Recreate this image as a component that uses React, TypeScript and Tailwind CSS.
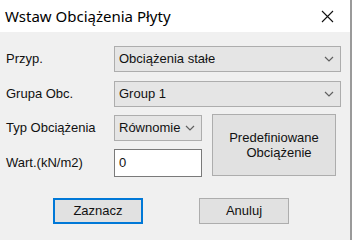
import React from 'react';

const font = { fontFamily: '"Liberation Sans", Arial, sans-serif' };

function Chevron() {
  return (
    <svg width="10" height="6" viewBox="0 0 10 6" className="shrink-0">
      <path d="M1 1 L5 5 L9 1" fill="none" stroke="#606060" strokeWidth="1.2" />
    </svg>
  );
}

function Combo({ value, width, textWidth }: { value: string; width: string; textWidth?: string }) {
  return (
    <div
      className={`${width} h-[26px] flex items-center justify-between bg-[#e5e5e5] border border-[#adadad] pl-[4px] pr-[6px] text-[13px] text-[#111] overflow-hidden`}
    >
      <span className={`whitespace-nowrap overflow-hidden ${textWidth ?? ''}`}>{value}</span>
      <Chevron />
    </div>
  );
}

export default function App() {
  return (
    <div className="w-[352px] h-[240px] bg-[#f0f0f0] flex flex-col overflow-hidden border-r-2 border-[#9a9a9a]" style={font}>
      <div className="h-[32px] bg-white flex items-center justify-between pl-[5px] pr-[16px]">
        <span className="text-[15px] text-black" style={{ fontFamily: '"Noto Sans", "Open Sans", sans-serif' }}>
          Wstaw Obciążenia Płyty
        </span>
        <svg width="13" height="13" viewBox="0 0 13 13">
          <path d="M1 1 L12 12 M12 1 L1 12" stroke="#111" strokeWidth="1.1" />
        </svg>
      </div>

      <div className="flex flex-col pl-[6px] pt-[14px] text-[13px] text-[#111]">
        <div className="flex items-center">
          <span className="w-[108px]">Przyp.</span>
          <Combo value="Obciążenia stałe" width="w-[227px]" />
        </div>
        <div className="flex items-center mt-[9px]">
          <span className="w-[108px]">Grupa Obc.</span>
          <Combo value="Group 1" width="w-[227px]" />
        </div>

        <div className="flex mt-[8px]">
          <div className="flex flex-col">
            <div className="flex items-center">
              <span className="w-[108px]">Typ Obciążenia</span>
              <Combo value="Równomie" width="w-[88px]" textWidth="w-[62px]" />
            </div>
            <div className="flex items-center mt-[8px]">
              <span className="w-[108px]">Wart.(kN/m2)</span>
              <div className="w-[88px] h-[28px] bg-white border border-[#7a7a7a] flex items-center pl-[4px]">0</div>
            </div>
          </div>
          <button className="ml-[10px] mt-[-1px] w-[124px] h-[62px] bg-[#e1e1e1] border border-[#adadad] flex flex-col items-center justify-center leading-[15px] text-[13px] text-[#111]">
            <span>Predefiniowane</span>
            <span className="pl-[10px]">Obciążenie</span>
          </button>
        </div>

        <div className="flex mt-[21px]">
          <button className="ml-[47px] w-[90px] h-[26px] bg-[#e1e1e1] border-2 border-[#0078d7] text-[13px] text-[#111]">
            Zaznacz
          </button>
          <button className="ml-[56px] w-[90px] h-[26px] bg-[#e1e1e1] border border-[#adadad] text-[13px] text-[#111]">
            Anuluj
          </button>
        </div>
      </div>
    </div>
  );
}
